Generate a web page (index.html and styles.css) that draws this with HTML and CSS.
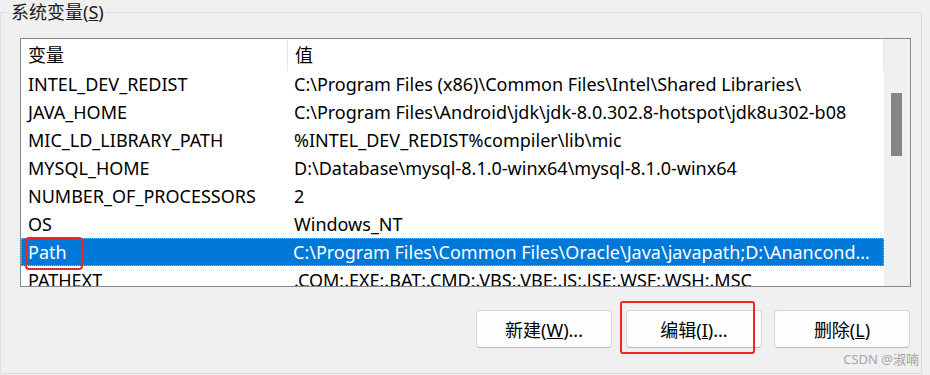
FILE: index.html
```html
<!DOCTYPE html>
<html>
<head>
<meta charset="utf-8">
<title>系统变量</title>
<link rel="stylesheet" href="styles.css">
</head>
<body>
  <fieldset class="group">
    <legend>系统变量(<u>S</u>)</legend>
    <div class="listbox">
      <div class="list">
        <div class="row head">
          <span class="name">变量</span>
          <span class="val">值</span>
        </div>
        <div class="row"><span class="name">INTEL_DEV_REDIST</span><span class="val">C:\Program Files (x86)\Common Files\Intel\Shared Libraries\</span></div>
        <div class="row"><span class="name">JAVA_HOME</span><span class="val">C:\Program Files\Android\jdk\jdk-8.0.302.8-hotspot\jdk8u302-b08</span></div>
        <div class="row"><span class="name">MIC_LD_LIBRARY_PATH</span><span class="val">%INTEL_DEV_REDIST%compiler\lib\mic</span></div>
        <div class="row"><span class="name">MYSQL_HOME</span><span class="val">D:\Database\mysql-8.1.0-winx64\mysql-8.1.0-winx64</span></div>
        <div class="row"><span class="name">NUMBER_OF_PROCESSORS</span><span class="val">2</span></div>
        <div class="row"><span class="name">OS</span><span class="val">Windows_NT</span></div>
        <div class="row selected">
          <span class="name">Path<span class="mark"></span></span>
          <span class="val">C:\Program Files\Common Files\Oracle\Java\javapath;D:\Ananconda3;D:\Ananconda3\Scripts</span>
        </div>
        <div class="row"><span class="name">PATHEXT</span><span class="val">.COM;.EXE;.BAT;.CMD;.VBS;.VBE;.JS;.JSE;.WSF;.WSH;.MSC</span></div>
      </div>
      <div class="scrollbar"><div class="thumb"></div></div>
    </div>

    <div class="buttons">
      <button class="btn">新建(<u>W</u>)...</button>
      <div class="btn-wrap">
        <button class="btn">编辑(<u>I</u>)...</button>
        <span class="mark mark-btn"></span>
      </div>
      <button class="btn">删除(<u>L</u>)</button>
    </div>

    <div class="watermark">CSDN @淑喃</div>
  </fieldset>
</body>
</html>
```

FILE: styles.css
```css
body {
  margin: 0;
  background-color: #f0f0f0;
  font-family: "Noto Sans", "Noto Sans CJK SC", sans-serif;
  font-size: 18px;
  color: #000;
}

.group {
  position: relative;
  box-sizing: border-box;
  width: 922px;
  height: 374px;
  margin: 0;
  padding: 0 0 0 19px;
  border: 1px solid #dcdcdc;
  border-left-color: #e2e2e2;
}

.group legend {
  margin-left: -11px;
  padding: 0 2px;
  font-size: 18px;
  line-height: 25px;
  color: #1a1a1a;
}

.listbox {
  display: flex;
  width: 891px;
  height: 249px;
  margin-top: 13px;
  box-sizing: border-box;
  border: 1px solid #828790;
  background-color: #fff;
}

.list {
  flex: 1;
  overflow: hidden;
}

.row {
  display: flex;
  height: 28px;
  align-items: center;
  white-space: nowrap;
}

.row .name {
  position: relative;
  width: 259px;
  padding-left: 7px;
  flex-shrink: 0;
}

.row .val {
  flex: 1;
  min-width: 0;
  padding-left: 7px;
  padding-right: 6px;
  overflow: hidden;
  text-overflow: ellipsis;
}

.head {
  height: 31px;
  align-items: flex-start;
  padding-top: 3px;
  box-sizing: border-box;
}

.head .name,
.head .val {
  line-height: 26px;
}

.head .val {
  border-left: 1px solid #e5e5e5;
  border-right: 1px solid #e5e5e5;
  height: 29px;
  margin-top: -2px;
  padding-top: 2px;
}

.selected {
  background-color: #0078d7;
  color: #fff;
  box-sizing: border-box;
  border: 1px dotted #f0a040;
}

.selected .name {
  width: 258px;
  padding-left: 6px;
}

.mark {
  position: absolute;
  left: 3px;
  top: -3px;
  width: 54px;
  height: 29px;
  border: 2px solid #f0261f;
  border-radius: 4px;
}

.scrollbar {
  width: 26px;
  background-color: #f0f0f0;
  padding-top: 54px;
  box-sizing: border-box;
}

.thumb {
  width: 11px;
  height: 63px;
  margin-left: 7px;
  background-color: #858585;
}

.buttons {
  display: flex;
  justify-content: flex-end;
  align-items: center;
  gap: 14px;
  width: 890px;
  margin-top: 23px;
}

.buttons .btn-wrap + .btn {
  margin-left: -2px;
}

.btn-wrap {
  position: relative;
}

.btn {
  display: block;
  width: 136px;
  height: 38px;
  background-color: #fdfdfd;
  border: 1px solid #d6d6d6;
  border-bottom-color: #b8b8b8;
  border-radius: 4px;
  font-family: "Noto Sans", "Noto Sans CJK SC", sans-serif;
  font-size: 18px;
  color: #000;
  padding: 0;
}

.mark-btn {
  left: -6px;
  top: -9px;
  width: 131px;
  height: 49px;
  border-radius: 3px;
}

.watermark {
  position: absolute;
  right: 2px;
  bottom: 5px;
  font-size: 13px;
  color: #a6a6a6;
}
```
